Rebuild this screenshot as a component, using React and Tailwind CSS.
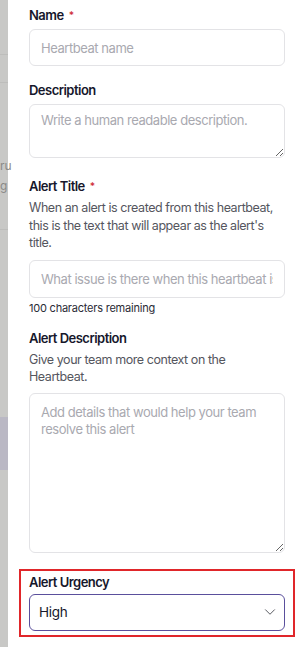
import { ChevronDown } from 'lucide-react';

function Label({ children, required }) {
  return (
    <div className="text-[13px] font-semibold leading-[18px] text-[#16172b] tracking-[-0.04em]">
      {children}
      {required && <span className="ml-[5px] align-top text-[10px] text-[#d0303c]">*</span>}
    </div>
  );
}

function Hint({ children }) {
  return <p className="mt-[4px] text-[12.5px] leading-[17.5px] text-[#55565e] tracking-[-0.035em]">{children}</p>;
}

export default function App() {
  return (
    <div className="flex min-h-[647px] w-[306px] overflow-hidden bg-white font-['Inter',sans-serif]">
      {/* backdrop strip */}
      <div className="relative w-[8px] shrink-0 bg-[#c8c8c6]">
        <div className="absolute left-0 top-[54px] h-px w-full bg-[#bdbdbb]" />
        <div className="absolute left-0 top-[82px] h-px w-full bg-[#bdbdbb]" />
        <div className="absolute left-0 top-[156px] text-[12px] leading-[20px] text-[#8a8a88]">ru<br />g</div>
        <div className="absolute left-0 top-[229px] h-px w-full bg-[#bdbdbb]" />
        <div className="absolute left-0 top-[417px] h-[53px] w-full bg-[#bab8c4]" />
      </div>

      <div className="flex-1 px-[21px] pt-[6px] pb-[9px]">
        <Label required>Name</Label>
        <input
          placeholder="Heartbeat name"
          className="mt-[5px] h-[37px] w-full rounded-[6px] border border-[#e3e3e6] px-[11px] text-[13px] tracking-[-0.035em] text-[#16172b] placeholder:text-[#a9a9b0] outline-none"
        />

        <div className="mt-[15px]">
          <Label>Description</Label>
          <textarea
            placeholder="Write a human readable description."
            className="mt-[5px] block h-[54px] w-full resize-y rounded-[6px] border border-[#e3e3e6] px-[11px] py-[7px] text-[13px] tracking-[-0.035em] leading-[17px] placeholder:text-[#a9a9b0] outline-none"
          />
        </div>

        <div className="mt-[19px]">
          <Label required>Alert Title</Label>
          <Hint>When an alert is created from this heartbeat, this is the text that will appear as the alert's title.</Hint>
          <input
            placeholder="What issue is there when this heartbeat is missed?"
            className="mt-[8px] h-[38px] w-full rounded-[6px] border border-[#e3e3e6] px-[11px] text-[13px] tracking-[-0.035em] placeholder:text-[#a9a9b0] outline-none"
          />
          <p className="mt-[2px] text-[11px] leading-[16px] tracking-[-0.02em] text-[#2a2b36]">100 characters remaining</p>
        </div>

        <div className="mt-[13px]">
          <Label>Alert Description</Label>
          <Hint>Give your team more context on the Heartbeat.</Hint>
          <textarea
            placeholder="Add details that would help your team resolve this alert"
            className="mt-[7px] block h-[160px] w-full resize-y rounded-[6px] border border-[#e3e3e6] px-[11px] py-[10px] text-[13px] tracking-[-0.035em] leading-[17.5px] placeholder:text-[#a9a9b0] outline-none"
          />
        </div>

        <div className="mt-[16px] -mx-[10px] border-2 border-[#e0262a] px-[8px] pt-[2px] pb-[4px]">
          <Label>Alert Urgency</Label>
          <div className="mt-[3px] flex h-[37px] items-center justify-between rounded-[6px] border border-[#5a4f9c] pl-[9px] pr-[5px]">
            <span className="text-[13.5px] tracking-[-0.02em] text-[#16172b]">High</span>
            <ChevronDown size={18} strokeWidth={1.3} className="text-[#55565e]" />
          </div>
        </div>
      </div>
    </div>
  );
}
